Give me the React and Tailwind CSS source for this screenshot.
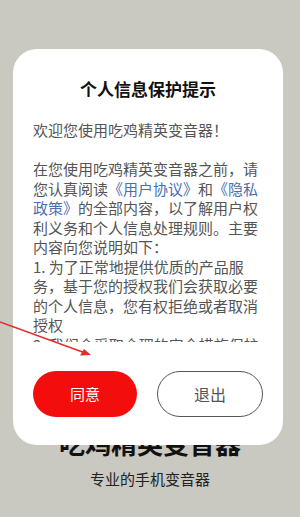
import React from 'react';

const cjk = { fontFamily: '"Noto Sans CJK SC", "Noto Sans", sans-serif' };

const Link = ({ children }) => <span className="text-[#4b6fae]">{children}</span>;

const App = () => {
    return (
        <div className="relative w-[300px] h-[517px] overflow-hidden bg-[#c9c8c1]" style={cjk}>
            {/* page behind the dialog */}
            <div className="flex flex-col items-center pt-[427px]">
                <h1 className="text-[26px] leading-[32px] font-bold text-[#111] tracking-[0px]">吃鸡精英变音器</h1>
                <p className="mt-[10px] text-[15px] leading-[20px] text-[#222]">专业的手机变音器</p>
            </div>

            {/* privacy dialog */}
            <div className="absolute left-[13px] top-[49px] w-[270px] h-[396px] bg-white rounded-[24px] flex flex-col pt-[28px] pb-[28px] pl-[20px] pr-[20px]">
                <h2 className="text-[17px] leading-[24px] font-bold text-[#111] text-center">个人信息保护提示</h2>
                <div className="mt-[19px] h-[222px] overflow-hidden w-[226px] text-[15px] leading-[19.5px] text-[#555]">
                    <p>欢迎您使用吃鸡精英变音器！</p>
                    <p className="mt-[19.5px]">
                        在您使用吃鸡精英变音器之前，请您认真阅读<Link>《用户协议》</Link>和<Link>《隐私政策》</Link>的全部内容，以了解用户权利义务和个人信息处理规则。主要内容向您说明如下：
                    </p>
                    <p>1. 为了正常地提供优质的产品服务，基于您的授权我们会获取必要的个人信息，您有权拒绝或者取消授权</p>
                    <p>2. 我们会采取合理的安全措施保护您的个人信息安全</p>
                </div>
                <div className="mt-[29px] flex gap-5">
                    <button className="flex-1 h-[46px] rounded-full bg-[#f40d0d] text-white text-[15px]">同意</button>
                    <button className="flex-1 h-[46px] rounded-full bg-white border border-[#555] text-[#555] text-[16px]">退出</button>
                </div>
            </div>

            {/* red annotation arrow */}
            <svg className="absolute left-0 top-[318px]" width="100" height="45" viewBox="0 0 100 45">
                <line x1="0" y1="4" x2="88" y2="36" stroke="#e42a2a" strokeWidth="1.5" />
                <path d="M91 37 L80 37.5 L84 31 Z" fill="#e42a2a" />
            </svg>
        </div>
    );
};

export default App;
